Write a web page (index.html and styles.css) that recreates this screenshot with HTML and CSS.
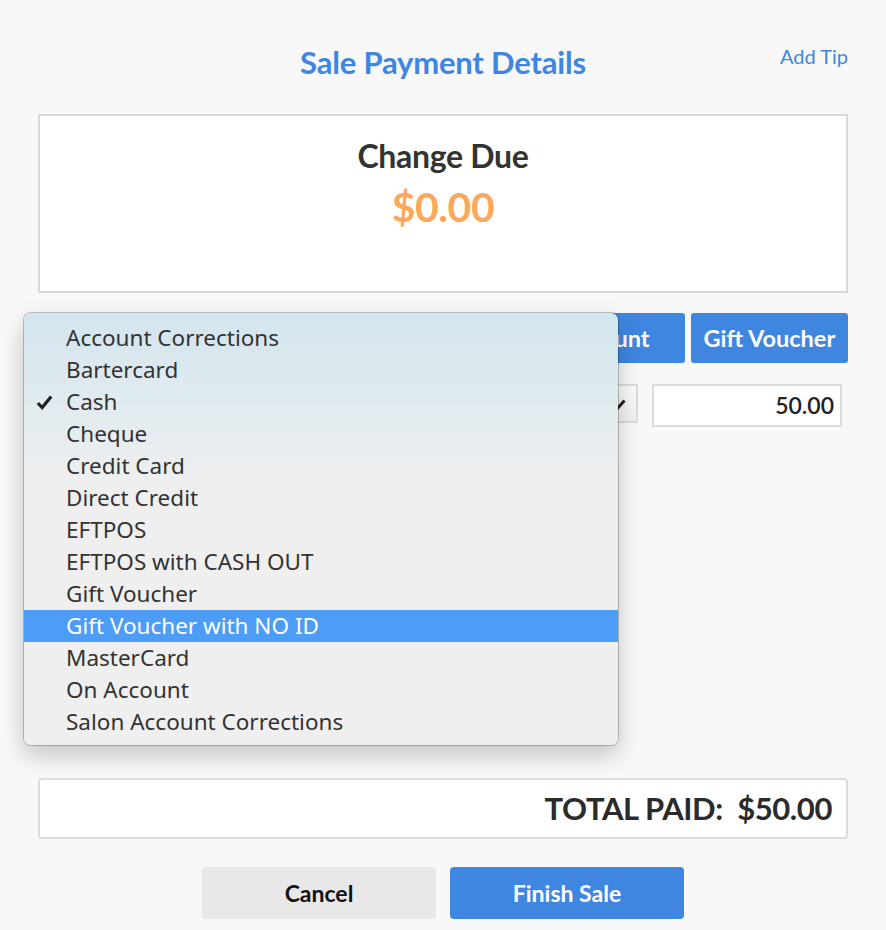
FILE: index.html
```html
<!DOCTYPE html>
<html>
<head>
<meta charset="utf-8">
<title>Sale Payment Details</title>
<link rel="stylesheet" href="styles.css">
</head>
<body>
<div class="page">

  <div class="header">
    <span></span>
    <h1 class="title">Sale Payment Details</h1>
    <a class="add-tip" href="#">Add Tip</a>
  </div>

  <div class="change-box">
    <div class="change-label">Change Due</div>
    <div class="change-amount">$0.00</div>
  </div>

  <div class="methods">
    <button class="method">Cash</button>
    <button class="method">EFTPOS</button>
    <button class="method">Credit Card</button>
    <button class="method">Account</button>
    <button class="method">Gift Voucher</button>
  </div>

  <div class="pay-row">
    <div class="pay-select">
      <span>Cash</span>
      <svg class="tick" width="14" height="12" viewBox="0 0 14 12"><path d="M1.5 6.5 L5 10 L12.5 1.5" fill="none" stroke="#222" stroke-width="3"/></svg>
    </div>
    <div class="pay-amount">50.00</div>
  </div>

  <div class="total-box">TOTAL PAID:&nbsp; $50.00</div>

  <div class="actions">
    <button class="btn btn-cancel">Cancel</button>
    <button class="btn btn-finish">Finish Sale</button>
  </div>

  <!-- native select popup, open over the payment rows -->
  <ul class="menu">
    <li>Account Corrections</li>
    <li>Bartercard</li>
    <li><svg class="check" width="17" height="15" viewBox="0 0 17 15"><path d="M1.8 8 L6.2 12.6 L15.2 1.6" fill="none" stroke="#222" stroke-width="3.2"/></svg>Cash</li>
    <li>Cheque</li>
    <li>Credit Card</li>
    <li>Direct Credit</li>
    <li>EFTPOS</li>
    <li>EFTPOS with CASH OUT</li>
    <li>Gift Voucher</li>
    <li class="active">Gift Voucher with NO ID</li>
    <li>MasterCard</li>
    <li>On Account</li>
    <li>Salon Account Corrections</li>
  </ul>

</div>
</body>
</html>
```

FILE: styles.css
```css
body {
  margin: 0;
  background: #f8f8f8;
  font-family: Lato, "Open Sans", sans-serif;
  color: #333;
}

.page {
  position: relative;
  width: 810px;
  height: 930px;
  padding: 0 38px;
}

.header {
  display: grid;
  grid-template-columns: 1fr auto 1fr;
  align-items: center;
  padding-top: 42px;
  height: 40px;
}

.title {
  margin: 0;
  font-size: 31px;
  font-weight: 700;
  color: #3f86e0;
  letter-spacing: -0.2px;
}

.add-tip {
  justify-self: end;
  font-size: 20px;
  color: #3f86e0;
  text-decoration: none;
  position: relative;
  top: -6px;
}

.change-box {
  margin-top: 32px;
  height: 175px;
  background: #fff;
  border: 2px solid #d9d9d9;
  text-align: center;
}

.change-label {
  margin-top: 20px;
  font-size: 32px;
  font-weight: 700;
  color: #333;
  letter-spacing: -0.3px;
}

.change-amount {
  margin-top: 7px;
  font-size: 41px;
  font-weight: 700;
  color: #fca85c;
  letter-spacing: -0.5px;
}

.methods {
  display: grid;
  grid-template-columns: repeat(5, 1fr);
  gap: 6px;
  margin-top: 20px;
}

.method {
  height: 50px;
  border: 0;
  border-radius: 3px;
  background: #3f86e0;
  color: #fff;
  font-family: Lato, sans-serif;
  font-size: 23.5px;
  font-weight: 700;
}

.pay-row {
  display: flex;
  gap: 14px;
  margin-top: 21px;
}

.pay-select {
  flex: 0 0 600px;
  height: 39px;
  display: flex;
  align-items: center;
  justify-content: space-between;
  padding: 0 10px 0 12px;
  box-sizing: border-box;
  border: 2px solid #dcdcdc;
  background: linear-gradient(#fbfbfb, #f0f0f0);
  font-size: 20px;
}

.tick {
  margin-top: 2px;
}

.pay-amount {
  width: 190px;
  height: 43px;
  box-sizing: border-box;
  padding: 0 6px;
  border: 2px solid #dcdcdc;
  background: #fff;
  text-align: right;
  line-height: 39px;
  font-size: 23px;
  font-weight: 600;
  color: #222;
}

.total-box {
  margin-top: 351px;
  height: 57px;
  background: #fff;
  border: 2px solid #dcdcdc;
  border-radius: 4px;
  padding-right: 14px;
  text-align: right;
  line-height: 57px;
  font-size: 31px;
  font-weight: 700;
  color: #2b2b2b;
  letter-spacing: -0.4px;
}

.actions {
  display: flex;
  justify-content: center;
  gap: 14px;
  margin-top: 28px;
}

.btn {
  width: 234px;
  height: 52px;
  border: 0;
  border-radius: 4px;
  font-family: Lato, sans-serif;
  font-size: 23px;
  font-weight: 700;
}

.btn-cancel {
  background: #e8e8e8;
  color: #111;
}

.btn-finish {
  background: #3f86e0;
  color: #fff;
}

.menu {
  position: absolute;
  left: 24px;
  top: 313px;
  width: 594px;
  height: 432px;
  box-sizing: border-box;
  margin: 0;
  padding: 9px 0 0;
  list-style: none;
  border-radius: 7px;
  background: linear-gradient(#d3e5ee 0, #e4ecef 25%, #efefef 40%, #efefef 100%);
  box-shadow: 0 0 0 1px rgba(0, 0, 0, 0.22), 0 10px 24px rgba(0, 0, 0, 0.22);
  font-family: "Noto Sans", "Open Sans", sans-serif;
  font-size: 22.5px;
  color: #333;
}

.menu li {
  position: relative;
  height: 32px;
  line-height: 32px;
  padding-left: 42px;
}

.menu .check {
  position: absolute;
  left: 12px;
  top: 9px;
}

.menu li.active {
  background: #4d9cf8;
  color: #fff;
}
```
